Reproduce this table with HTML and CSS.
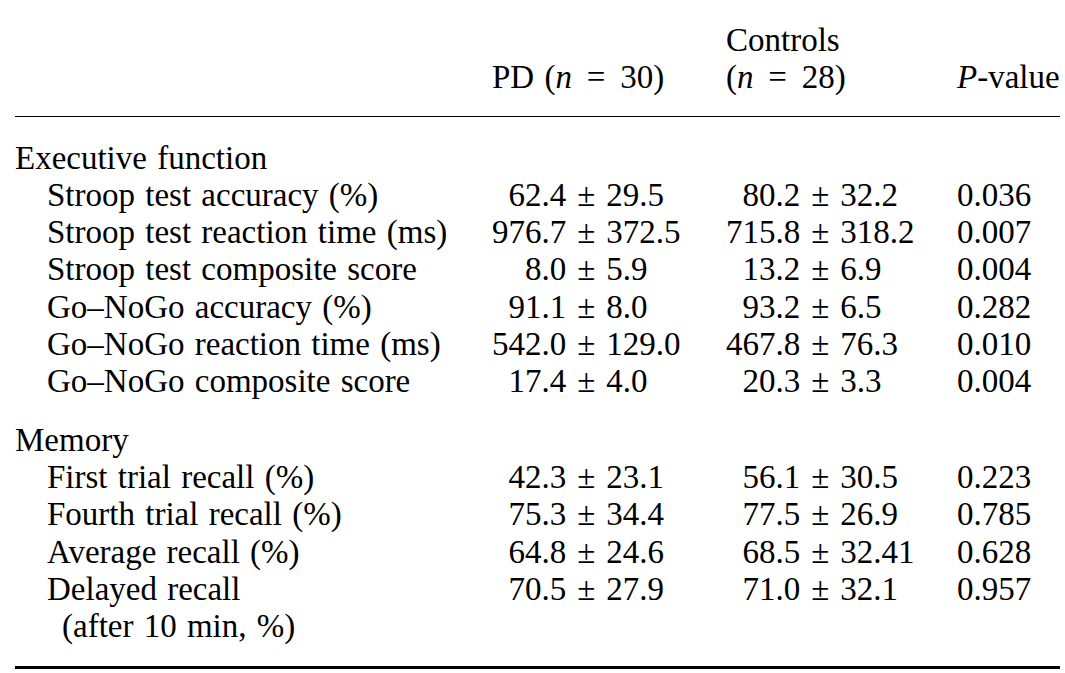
FILE: index.html
```html
<!DOCTYPE html>
<html lang="en">
<head>
<meta charset="utf-8">
<title>Table</title>
<link rel="stylesheet" href="styles.css">
</head>
<body>
<div class="page">
<table class="data">
  <colgroup>
    <col class="c-label">
    <col class="c-pd">
    <col class="c-ctrl">
    <col class="c-p">
  </colgroup>
  <thead>
    <tr>
      <th class="h"></th>
      <th class="h">PD (<i>n</i><span class="eq">=</span>30)</th>
      <th class="h">Controls<br>(<i>n</i><span class="eq">=</span>28)</th>
      <th class="h"><i>P</i>-value</th>
    </tr>
  </thead>
  <tbody>
    <tr class="first">
      <td class="group">Executive function</td><td></td><td></td><td></td>
    </tr>
    <tr>
      <td class="sub">Stroop test accuracy (%)</td>
      <td><span class="m">62.4</span><span class="pm">±</span>29.5</td>
      <td><span class="m">80.2</span><span class="pm">±</span>32.2</td>
      <td>0.036</td>
    </tr>
    <tr>
      <td class="sub">Stroop test reaction time (ms)</td>
      <td><span class="m">976.7</span><span class="pm">±</span>372.5</td>
      <td><span class="m">715.8</span><span class="pm">±</span>318.2</td>
      <td>0.007</td>
    </tr>
    <tr>
      <td class="sub">Stroop test composite score</td>
      <td><span class="m">8.0</span><span class="pm">±</span>5.9</td>
      <td><span class="m">13.2</span><span class="pm">±</span>6.9</td>
      <td>0.004</td>
    </tr>
    <tr>
      <td class="sub">Go–NoGo accuracy (%)</td>
      <td><span class="m">91.1</span><span class="pm">±</span>8.0</td>
      <td><span class="m">93.2</span><span class="pm">±</span>6.5</td>
      <td>0.282</td>
    </tr>
    <tr>
      <td class="sub">Go–NoGo reaction time (ms)</td>
      <td><span class="m">542.0</span><span class="pm">±</span>129.0</td>
      <td><span class="m">467.8</span><span class="pm">±</span>76.3</td>
      <td>0.010</td>
    </tr>
    <tr>
      <td class="sub">Go–NoGo composite score</td>
      <td><span class="m">17.4</span><span class="pm">±</span>4.0</td>
      <td><span class="m">20.3</span><span class="pm">±</span>3.3</td>
      <td>0.004</td>
    </tr>
    <tr class="section">
      <td class="group">Memory</td><td></td><td></td><td></td>
    </tr>
    <tr>
      <td class="sub">First trial recall (%)</td>
      <td><span class="m">42.3</span><span class="pm">±</span>23.1</td>
      <td><span class="m">56.1</span><span class="pm">±</span>30.5</td>
      <td>0.223</td>
    </tr>
    <tr>
      <td class="sub">Fourth trial recall (%)</td>
      <td><span class="m">75.3</span><span class="pm">±</span>34.4</td>
      <td><span class="m">77.5</span><span class="pm">±</span>26.9</td>
      <td>0.785</td>
    </tr>
    <tr>
      <td class="sub">Average recall (%)</td>
      <td><span class="m">64.8</span><span class="pm">±</span>24.6</td>
      <td><span class="m">68.5</span><span class="pm">±</span>32.41</td>
      <td>0.628</td>
    </tr>
    <tr class="last">
      <td class="sub wrap">Delayed recall<br>(after 10 min, %)</td>
      <td><span class="m">70.5</span><span class="pm">±</span>27.9</td>
      <td><span class="m">71.0</span><span class="pm">±</span>32.1</td>
      <td>0.957</td>
    </tr>
  </tbody>
</table>
</div>
</body>
</html>
```

FILE: styles.css
```css
html, body {
  margin: 0;
  padding: 0;
  background: #ffffff;
}

.page {
  padding-left: 15px;
  width: 1045px;
}

.data {
  width: 1045px;
  border-collapse: collapse;
  table-layout: fixed;
  font-family: "Liberation Serif", "Times New Roman", serif;
  font-size: 33px;
  line-height: 37.3px;
  word-spacing: 2px;
  color: #000;
}

.c-label { width: 477px; }
.c-pd { width: 234px; }
.c-ctrl { width: 231px; }
.c-p { width: 103px; }

.data th,
.data td {
  padding: 0;
  text-align: left;
  vertical-align: top;
  white-space: nowrap;
  font-weight: normal;
}

.data th.h {
  vertical-align: bottom;
  padding-top: 22px;
  padding-bottom: 19px;
  border-bottom: 1px solid #000;
}

.eq {
  margin: 0 0.45em;
}

.data tr.first td {
  padding-top: 23px;
}

.data tr.section td {
  padding-top: 21px;
}

.data tr.last td {
  padding-bottom: 21px;
  border-bottom: 3px solid #000;
}

.sub {
  padding-left: 32px !important;
}

.sub.wrap {
  padding-left: 47px !important;
  text-indent: -15px;
}

.m {
  display: inline-block;
  width: 2.25em;
  text-align: right;
}

.pm {
  margin: 0 0.33em;
  word-spacing: 0;
}
```
